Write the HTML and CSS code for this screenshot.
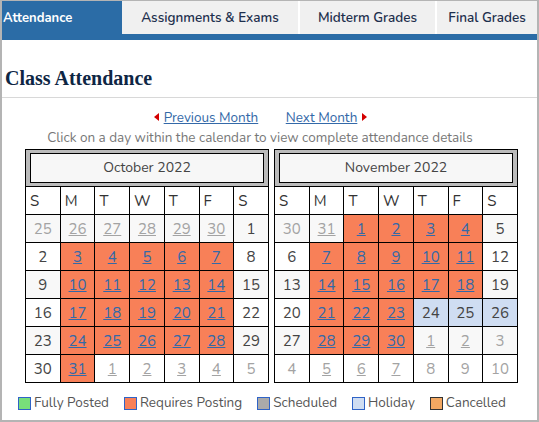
FILE: index.html
```html
<!DOCTYPE html>
<html lang="en">
<head>
    <meta charset="UTF-8">
    <title>Class Attendance</title>
    <link rel="stylesheet" href="styles.css">
</head>
<body>
    <div class="page">
        <div class="tabs">
            <div class="tab active">Attendance</div>
            <div class="tab tab-assign">Assignments &amp; Exams</div>
            <div class="tab tab-mid">Midterm Grades</div>
            <div class="tab tab-final">Final Grades</div>
        </div>
        <div class="tab-bar"></div>

        <h2 class="title">Class Attendance</h2>

        <div class="month-nav">
            <span class="arrow left"></span><a href="#">Previous Month</a>
            <a href="#" class="next">Next Month</a><span class="arrow right"></span>
        </div>
        <div class="hint">Click on a day within the calendar to view complete attendance details</div>

        <div class="calendars">
            <table class="cal">
                <tr><th colspan="7" class="month-head"><div class="month-name">October 2022</div></th></tr>
                <tr class="dow"><td>S</td><td>M</td><td>T</td><td>W</td><td>T</td><td>F</td><td>S</td></tr>
                <tr class="odd">
                    <td class="out">25</td><td class="out"><a href="#">26</a></td><td class="out"><a href="#">27</a></td><td class="out"><a href="#">28</a></td><td class="out"><a href="#">29</a></td><td class="out"><a href="#">30</a></td><td>1</td>
                </tr>
                <tr>
                    <td>2</td><td class="req"><a href="#">3</a></td><td class="req"><a href="#">4</a></td><td class="req"><a href="#">5</a></td><td class="req"><a href="#">6</a></td><td class="req"><a href="#">7</a></td><td>8</td>
                </tr>
                <tr class="odd">
                    <td>9</td><td class="req"><a href="#">10</a></td><td class="req"><a href="#">11</a></td><td class="req"><a href="#">12</a></td><td class="req"><a href="#">13</a></td><td class="req"><a href="#">14</a></td><td>15</td>
                </tr>
                <tr>
                    <td>16</td><td class="req"><a href="#">17</a></td><td class="req"><a href="#">18</a></td><td class="req"><a href="#">19</a></td><td class="req"><a href="#">20</a></td><td class="req"><a href="#">21</a></td><td>22</td>
                </tr>
                <tr class="odd">
                    <td>23</td><td class="req"><a href="#">24</a></td><td class="req"><a href="#">25</a></td><td class="req"><a href="#">26</a></td><td class="req"><a href="#">27</a></td><td class="req"><a href="#">28</a></td><td>29</td>
                </tr>
                <tr>
                    <td>30</td><td class="req"><a href="#">31</a></td><td class="out"><a href="#">1</a></td><td class="out"><a href="#">2</a></td><td class="out"><a href="#">3</a></td><td class="out"><a href="#">4</a></td><td class="out">5</td>
                </tr>
            </table>

            <table class="cal">
                <tr><th colspan="7" class="month-head"><div class="month-name">November 2022</div></th></tr>
                <tr class="dow"><td>S</td><td>M</td><td>T</td><td>W</td><td>T</td><td>F</td><td>S</td></tr>
                <tr class="odd">
                    <td class="out">30</td><td class="out"><a href="#">31</a></td><td class="req"><a href="#">1</a></td><td class="req"><a href="#">2</a></td><td class="req"><a href="#">3</a></td><td class="req"><a href="#">4</a></td><td>5</td>
                </tr>
                <tr>
                    <td>6</td><td class="req"><a href="#">7</a></td><td class="req"><a href="#">8</a></td><td class="req"><a href="#">9</a></td><td class="req"><a href="#">10</a></td><td class="req"><a href="#">11</a></td><td>12</td>
                </tr>
                <tr class="odd">
                    <td>13</td><td class="req"><a href="#">14</a></td><td class="req"><a href="#">15</a></td><td class="req"><a href="#">16</a></td><td class="req"><a href="#">17</a></td><td class="req"><a href="#">18</a></td><td>19</td>
                </tr>
                <tr>
                    <td>20</td><td class="req"><a href="#">21</a></td><td class="req"><a href="#">22</a></td><td class="req"><a href="#">23</a></td><td class="hol">24</td><td class="hol">25</td><td class="hol">26</td>
                </tr>
                <tr class="odd">
                    <td>27</td><td class="req"><a href="#">28</a></td><td class="req"><a href="#">29</a></td><td class="req"><a href="#">30</a></td><td class="out"><a href="#">1</a></td><td class="out"><a href="#">2</a></td><td class="out">3</td>
                </tr>
                <tr>
                    <td class="out">4</td><td class="out"><a href="#">5</a></td><td class="out"><a href="#">6</a></td><td class="out"><a href="#">7</a></td><td class="out">8</td><td class="out">9</td><td class="out">10</td>
                </tr>
            </table>
        </div>

        <div class="legend">
            <span class="key"><span class="swatch posted"></span>Fully Posted</span>
            <span class="key"><span class="swatch requires"></span>Requires Posting</span>
            <span class="key"><span class="swatch scheduled"></span>Scheduled</span>
            <span class="key"><span class="swatch holiday"></span>Holiday</span>
            <span class="key"><span class="swatch cancelled"></span>Cancelled</span>
        </div>
    </div>
</body>
</html>
```

FILE: styles.css
```css
* {
    margin: 0;
    padding: 0;
    box-sizing: border-box;
}

body {
    font-family: "Nunito", "Open Sans", sans-serif;
    font-size: 14px;
    color: #555;
    background: #fff;
}

.page {
    width: 539px;
    height: 422px;
    border: 2px solid #b4b4b4;
    border-top: 1px solid #b4b4b4;
    overflow: hidden;
}

.tabs {
    display: flex;
    height: 33px;
}

.tab {
    background: #f0f0f0;
    color: #1d2f4d;
    font-weight: 600;
    font-size: 13.5px;
    display: flex;
    align-items: center;
    justify-content: center;
    border-right: 2px solid #fff;
}

.tab.active {
    width: 120px;
    background: #2b6ca6;
    color: #fff;
    font-weight: 700;
    font-size: 13px;
    justify-content: flex-start;
    padding-left: 1px;
    border-right: 0;
}

.tab-assign { width: 178px; }
.tab-mid { width: 137px; }
.tab-final { flex: 1; border-right: 0; }

.tab-bar {
    height: 6px;
    background: #2b6ca6;
}

.title {
    font-family: "Liberation Serif", "Times New Roman", serif;
    font-size: 20px;
    font-weight: 700;
    color: #0e2644;
    padding: 27px 0 8px 3px;
    border-bottom: 1px solid #d8d8d8;
    line-height: 22px;
}

.month-nav {
    text-align: center;
    margin-top: 11px;
    line-height: 18px;
    padding-right: 18px;
    font-size: 13.5px;
}

.month-nav a {
    color: #3469a8;
}

.month-nav .next {
    margin-left: 24px;
}

.arrow {
    display: inline-block;
    width: 0;
    height: 0;
    border-top: 4px solid transparent;
    border-bottom: 4px solid transparent;
    vertical-align: 1px;
}

.arrow.left {
    border-right: 5px solid #d40000;
    margin-right: 5px;
}

.arrow.right {
    border-left: 5px solid #d40000;
    margin-left: 5px;
}

.hint {
    text-align: center;
    color: #777;
    line-height: 18px;
    margin-top: 2px;
    padding-right: 19px;
    font-size: 13.5px;
}

.calendars {
    display: flex;
    gap: 5px;
    padding-left: 23px;
    margin-top: 2px;
}

.cal {
    border-collapse: collapse;
    width: 244px;
    table-layout: fixed;
}

.month-head {
    background: #bbb;
    padding: 3px 4px;
    border: 1px solid #000;
    font-weight: 400;
}

.month-name {
    background: #f7f7f7;
    border: 1px solid #000;
    height: 30px;
    line-height: 28px;
    color: #444;
    font-size: 14px;
}

.cal td {
    border: 1px solid #000;
    height: 28px;
    text-align: center;
    font-size: 15px;
    color: #444;
    background: #fff;
}

.cal tr.odd td {
    background: #f8f8f8;
}

.cal tr.dow td {
    text-align: left;
    padding-left: 4px;
    color: #333;
    font-size: 15px;
}

.cal td a {
    color: #3469a8;
}

.cal td.out,
.cal td.out a {
    color: #a3a3a3;
}

.cal td.req,
.cal tr.odd td.req {
    background: #f88058;
}

.cal td.hol,
.cal tr.odd td.hol {
    background: #cfddf2;
    color: #444;
}

.legend {
    display: flex;
    gap: 15px;
    padding-left: 16px;
    margin-top: 11px;
    line-height: 18px;
    font-size: 13.5px;
}

.key {
    display: flex;
    align-items: center;
}

.swatch {
    display: inline-block;
    width: 13px;
    height: 13px;
    border: 1px solid #2f63c7;
    margin-right: 3px;
}

.posted { background: #78df7a; }
.requires { background: #f88058; }
.scheduled { background: #aaa; }
.holiday { background: #cfddf2; }
.cancelled { background: #f3a862; border-color: #333; }
```
